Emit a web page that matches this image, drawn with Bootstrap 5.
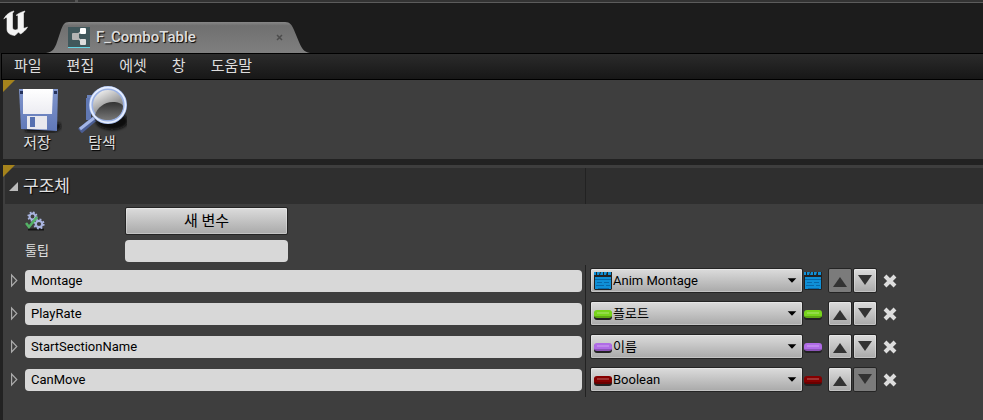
<!DOCTYPE html>
<html lang="ko">
<head>
<meta charset="utf-8">
<meta name="viewport" content="width=device-width, initial-scale=1">
<title>F_ComboTable</title>
<link href="https://cdn.jsdelivr.net/npm/bootstrap@5.3.0/dist/css/bootstrap.min.css" rel="stylesheet">
<style>
body{background:#222;color:#e0e0e0;font-family:Roboto,"Noto Sans CJK KR",sans-serif;font-size:13px;line-height:20px;min-height:100vh}
button,input,select{font:inherit}
.top-strip{height:3px;background:#333;border-bottom:1px solid #5c5c5c}
.top-strip span{width:3px;height:2px;margin-left:75px;background:#555}
.title-bar{height:50px;background:#1c1c1c}
.brand-mark{width:26px;height:26px;margin:7px 0 0 3px}
.doc-tab{width:264px;height:31px;margin:19px 0 0 17px;padding:0 22px 0 22px;background:none;border:0;isolation:isolate}
.tab-shape{position:absolute;inset:0;z-index:-1}
.tab-title{font-size:15px;font-weight:500;line-height:20px;margin-left:6px;padding-bottom:1px;color:#dedede;text-shadow:1px 1px 1px #000}
.tab-close{width:12px;height:12px;background:none;border:0}
.menu-bar{height:27px;margin-left:1px;border:1px solid #000;border-width:1px 0 1px 1px;background:linear-gradient(#2b2b2b,#171717);padding:0 12px 2px;gap:25px;font-size:15px}
.menu-bar a{color:#ddd;text-decoration:none}
.pane{position:relative;background:#3e3e3e;margin-left:3px}
.pane::before{content:"";position:absolute;left:0;top:0;border-top:12px solid #a5831c;border-right:12px solid transparent}
.tool-bar{height:79px;padding:5px 9px;gap:15px}
.tool-btn{width:50px;background:none;border:0;color:#ddd;font-size:15px;text-shadow:1px 1px 1px #000}
.tool-btn svg{width:50px;height:48px}
.details{margin-top:6px;padding-top:3px}
.split{display:grid;grid-template-columns:583fr 397fr}
.split>:first-child{border-right:1px solid #222}
.section-head{background:#2f2f2f;height:36px;margin-left:2px;grid-template-columns:581fr 397fr}
.section-head h1{font-size:17px;line-height:20px;font-weight:400;text-shadow:1px 1px 1px #000}
.section-toggle{width:18px;height:20px;background:none;border:0;padding:0}
.form-line{padding-left:22px}
.new-line{padding-top:3px}
.tip-line{padding:5px 0 3px 22px}
.form-key{width:100px}
.slate-btn,.slate-combo{background:linear-gradient(#dcdcdc,#a9a9a9);border:1px solid #242424;border-radius:2px;box-shadow:inset 0 0 0 1px rgba(255,255,255,.3);color:#000;padding:0}
.new-var{width:163px;height:28px;font-size:15px}
.slate-input{background:#d8d8d8;border:0;border-radius:4px;color:#000;height:22px;padding:0 6px}
.tooltip-input{width:163px}
.var-row{height:33px}
.name-side{padding:0 3px 2px 0}
.expander{width:22px;height:22px;background:none;border:0}
.type-side{padding:0 4px 2px 4px}
.slate-combo{width:213px;height:25px;padding-left:2px}
.slate-combo select{appearance:none;background:none;border:0;padding:0;color:#000;outline:0;height:22px}
.pin{width:20px;height:20px;flex:none}
.move-btn{width:24px;height:25px}
.move-btn:disabled{background:#7b7b7b;box-shadow:none}
.move-pair{gap:1px;margin-left:5px}
.delete-btn{width:14px;height:20px;margin-left:6px;background:none;border:0}
</style>
<script src="https://cdn.jsdelivr.net/npm/bootstrap@5.3.0/dist/js/bootstrap.bundle.min.js"></script>
</head>
<body class="d-flex flex-column">
<svg width="0" height="0" class="position-absolute" aria-hidden="true">
<defs>
<linearGradient id="gTab" x2="0" y2="1"><stop stop-color="#888"/><stop offset=".12" stop-color="#707070"/><stop offset="1" stop-color="#7f7f7f"/></linearGradient>
<linearGradient id="gBlue" x2="0" y2="1"><stop stop-color="#8196cc"/><stop offset="1" stop-color="#6078b8"/></linearGradient>
<linearGradient id="gPaper" x2="0" y2="1"><stop stop-color="#fff"/><stop offset="1" stop-color="#ececf2"/></linearGradient>
<linearGradient id="gLens" x1=".2" x2=".7" y2="1"><stop stop-color="#fff"/><stop offset=".55" stop-color="#999"/><stop offset="1" stop-color="#666"/></linearGradient>
<linearGradient id="gDark" x2="0" y2="1"><stop stop-color="#333"/><stop offset="1" stop-color="#777"/></linearGradient>
<filter id="soft" x="-30%" y="-30%" width="160%" height="160%"><feGaussianBlur stdDeviation="1.6"/></filter>
<symbol id="clip" viewBox="0 0 20 20"><path fill="#222" d="M1 1h18v17l-1 1H2l-1-1z"/><path fill="#0f8fd6" d="M1 1h2v3H1zM4 1h3L6 4H4zM8 1h2v3H7zM11 1h3l-1 3h-2zM15 1h3v3h-3zM2 6h16v12H2z"/><path stroke="#0868a8" d="M2 8.500h16M4 11.500h5M11 11.500h5M3 14.500h8M13 14.500h4M5 17.500h11"/></symbol>
<symbol id="pill" viewBox="0 0 20 20"><rect x="1" y="7" width="18" height="9" rx="3" fill="#222"/><rect x="1" y="6" width="18" height="8" rx="3" fill="currentColor"/><path stroke="#000" stroke-opacity=".2" stroke-width="2" d="M2 13h16"/><path stroke="#fff" stroke-opacity=".2" stroke-width="2" d="M4 9h12"/></symbol>
<symbol id="gear" viewBox="-6 -6 12 12"><circle r="3.200" fill="none" stroke="#aab5e0" stroke-width="2.200"/><circle r="4.700" fill="none" stroke="#aab5e0" stroke-width="1.800" stroke-dasharray="1.850 1.841"/></symbol>
<symbol id="arrUp" viewBox="0 0 22 23"><path fill="#333" d="M11 8l7 10H4z"/></symbol>
<symbol id="arrDown" viewBox="0 0 22 23"><path fill="#333" d="M4 6h14l-7 10z"/></symbol>
<symbol id="cross" viewBox="0 0 14 14"><path stroke="#ddd" stroke-width="4" d="M2 2l10 10M12 2L2 12"/></symbol>
<symbol id="caret" viewBox="0 0 12 7"><path fill="#000" d="M1 1h10L6 6z"/></symbol>
<symbol id="tri" viewBox="0 0 22 22"><path fill="none" stroke="#aaa" stroke-width="1.200" d="M8.600 5v11l5.200-5.500z"/></symbol>
</defs>
</svg>

<div class="top-strip d-flex"><span></span></div>
<header class="title-bar d-flex align-items-start">
<svg class="brand-mark" viewBox="0 0 26 26" aria-label="Unreal"><path fill="#f4f4f4" stroke="#f4f4f4" stroke-width=".6" d="M.8 9C3.500 4 7 2 11 1L9.500 3.500V17c0 2 1 3 2.800 3S15 19 15 18V6c0-1-1-1-2-.5C15.500 3 19 2 22 1l-1.500 2.500V17c0 1.500 1 1.500 4 0-1.500 3-4.500 5.500-7 7L15.500 22 12 25.500C7 25 4 23 4 19V9C4 7 3 7 .8 9z"/></svg>
<div class="doc-tab position-relative d-flex align-items-center">
<svg class="tab-shape w-100 h-100" viewBox="0 0 264 31" preserveAspectRatio="none" aria-hidden="true"><path fill="url(#gTab)" d="M0 31C7 30 9 26 11 20l4-12C17 3 18 0 23 0H239c5 0 7 3 9 8l5 12c3 7 5 10 11 11z"/></svg>
<svg width="22" height="22" viewBox="0 0 22 22" aria-hidden="true"><path fill="#41585c" d="M0 0h22v20H0z"/><path fill="#66d4e4" d="M0 20h22v1H0z"/><path stroke="#c8c8c8" stroke-width="1.500" fill="none" d="M10 7l4-3M10 11l4 4"/><rect x="4" y="6" width="7" height="7" rx="1" fill="#b4b4b4"/><rect x="12" y="1" width="6" height="6" rx="1" fill="#fff"/><rect x="12" y="12" width="6" height="6" rx="1" fill="#ddd"/></svg>
<span class="tab-title me-auto">F_ComboTable</span>
<button class="tab-close p-0 d-flex align-items-center" aria-label="닫기"><svg width="7" height="7" viewBox="0 0 7 7"><path stroke="#4c4c4c" stroke-width="1.500" d="M1 1l5 5M6 1L1 6"/></svg></button>
</div>
</header>
<nav class="menu-bar d-flex align-items-center"><a href="#">파일</a><a href="#">편집</a><a href="#">에셋</a><a href="#">창</a><a href="#">도움말</a></nav>

<section class="pane tool-bar d-flex align-items-start">
<button class="tool-btn p-0 d-flex flex-column align-items-center"><svg viewBox="0 0 50 48" aria-hidden="true"><path fill="#111" filter="url(#soft)" d="M12 38h36l1 5-6 4H14z"/><path fill="url(#gBlue)" d="M7 4h39l-1 42L9 44z"/><path fill="#26335c" d="M8 6h3v3H8zM42 6h3v3h-3z"/><path fill="url(#gPaper)" d="M11 4h30l-1 25H11z"/><path fill="#e8e8ee" d="M15 31h20v13.500L15 44z"/><path fill="#5670b0" d="M18 32h5v10h-5z"/></svg><span>저장</span></button>
<button class="tool-btn p-0 d-flex flex-column align-items-center"><svg viewBox="0 0 50 48" aria-hidden="true"><ellipse cx="35" cy="36" rx="16" ry="9" fill="#080808" filter="url(#soft)"/><path fill="#6a82bb" d="M10 10h37v14H10z"/><path fill="#6078b4" d="M9 13h5v22H9z"/><path stroke="#4b5e94" stroke-width="6" d="M17 34L3 46"/><path stroke="#a3b5e6" stroke-width="3" d="M17 33L3 44"/><circle cx="31" cy="20" r="17" fill="url(#gLens)" stroke="#9bb2e4" stroke-width="4"/><circle cx="31" cy="20" r="17.500" fill="none" stroke="#e6eeff" stroke-width="1.800"/><path fill="url(#gDark)" d="M18 30c2-7 9-13 18-13 5 0 8 1 10 4 0 8-7 14-15 14-5 0-9-1-13-5z"/></svg><span>탐색</span></button>
</section>

<main class="pane details flex-grow-1 d-flex flex-column">
<div class="split section-head">
<div class="d-flex align-items-center"><button class="section-toggle" aria-label="접기"><svg class="d-block" width="18" height="20" viewBox="0 0 18 20"><path fill="#bbb" d="M13 6v9H4z"/></svg></button><h1 class="m-0">구조체</h1></div><div></div>
</div>
<div class="form-line new-line d-flex align-items-center"><span class="form-key"><svg width="20" height="20" viewBox="0 0 20 20" aria-hidden="true"><path stroke="#151515" stroke-width="2" d="M3 18.500h16"/><use href="#gear" x="2" y="0" width="11" height="11"/><use href="#gear" x="8" y="7" width="12" height="12"/><path fill="none" stroke="#54b266" stroke-width="2.600" d="M1 12l3 4 8-10"/></svg></span><button class="slate-btn new-var">새 변수</button></div>
<div class="form-line tip-line d-flex align-items-center"><label class="form-key" for="tip">툴팁</label><input id="tip" class="slate-input tooltip-input" type="text"></div>
<div id="vars"></div>
</main>
<script>
const icon = (id, cls, color) => `<svg class="${cls}" style="color:${color}" aria-hidden="true"><use href="#${id}"/></svg>`;
const vars = [
  ["Montage", "Anim Montage", "clip", "#109be6"],
  ["PlayRate", "플로트", "pill", "#78d41c"],
  ["StartSectionName", "이름", "pill", "#b06be6"],
  ["CanMove", "Boolean", "pill", "#850000"]
];
document.getElementById("vars").innerHTML = vars.map(([name, type, shape, color], i) => `
<div class="split var-row">
  <div class="name-side d-flex align-items-center">
    <button class="expander p-0 flex-shrink-0" aria-label="${name} 펼치기"><svg class="d-block" width="22" height="22"><use href="#tri"/></svg></button>
    <input class="slate-input flex-grow-1" type="text" value="${name}" aria-label="변수 이름">
  </div>
  <div class="type-side d-flex align-items-center">
    <div class="slate-combo d-flex align-items-center">${icon(shape, "pin", color)}
      <select class="flex-grow-1" aria-label="${name} 타입"><option>${type}</option></select>
      <svg class="me-1" width="12" height="7" viewBox="0 0 14 7" aria-hidden="true"><use href="#caret" width="14" height="7"/></svg></div>
    ${icon(shape, "pin", color)}
    <div class="move-pair d-flex">
      <button class="slate-btn move-btn" aria-label="위로" ${i === 0 ? "disabled" : ""}><svg class="d-block" width="22" height="23"><use href="#arrUp"/></svg></button>
      <button class="slate-btn move-btn" aria-label="아래로" ${i === vars.length - 1 ? "disabled" : ""}><svg class="d-block" width="22" height="23"><use href="#arrDown"/></svg></button>
    </div>
    <button class="delete-btn p-0" aria-label="${name} 삭제"><svg class="d-block" width="14" height="20"><use href="#cross"/></svg></button>
  </div>
</div>`).join("");
</script>
</body>
</html>
